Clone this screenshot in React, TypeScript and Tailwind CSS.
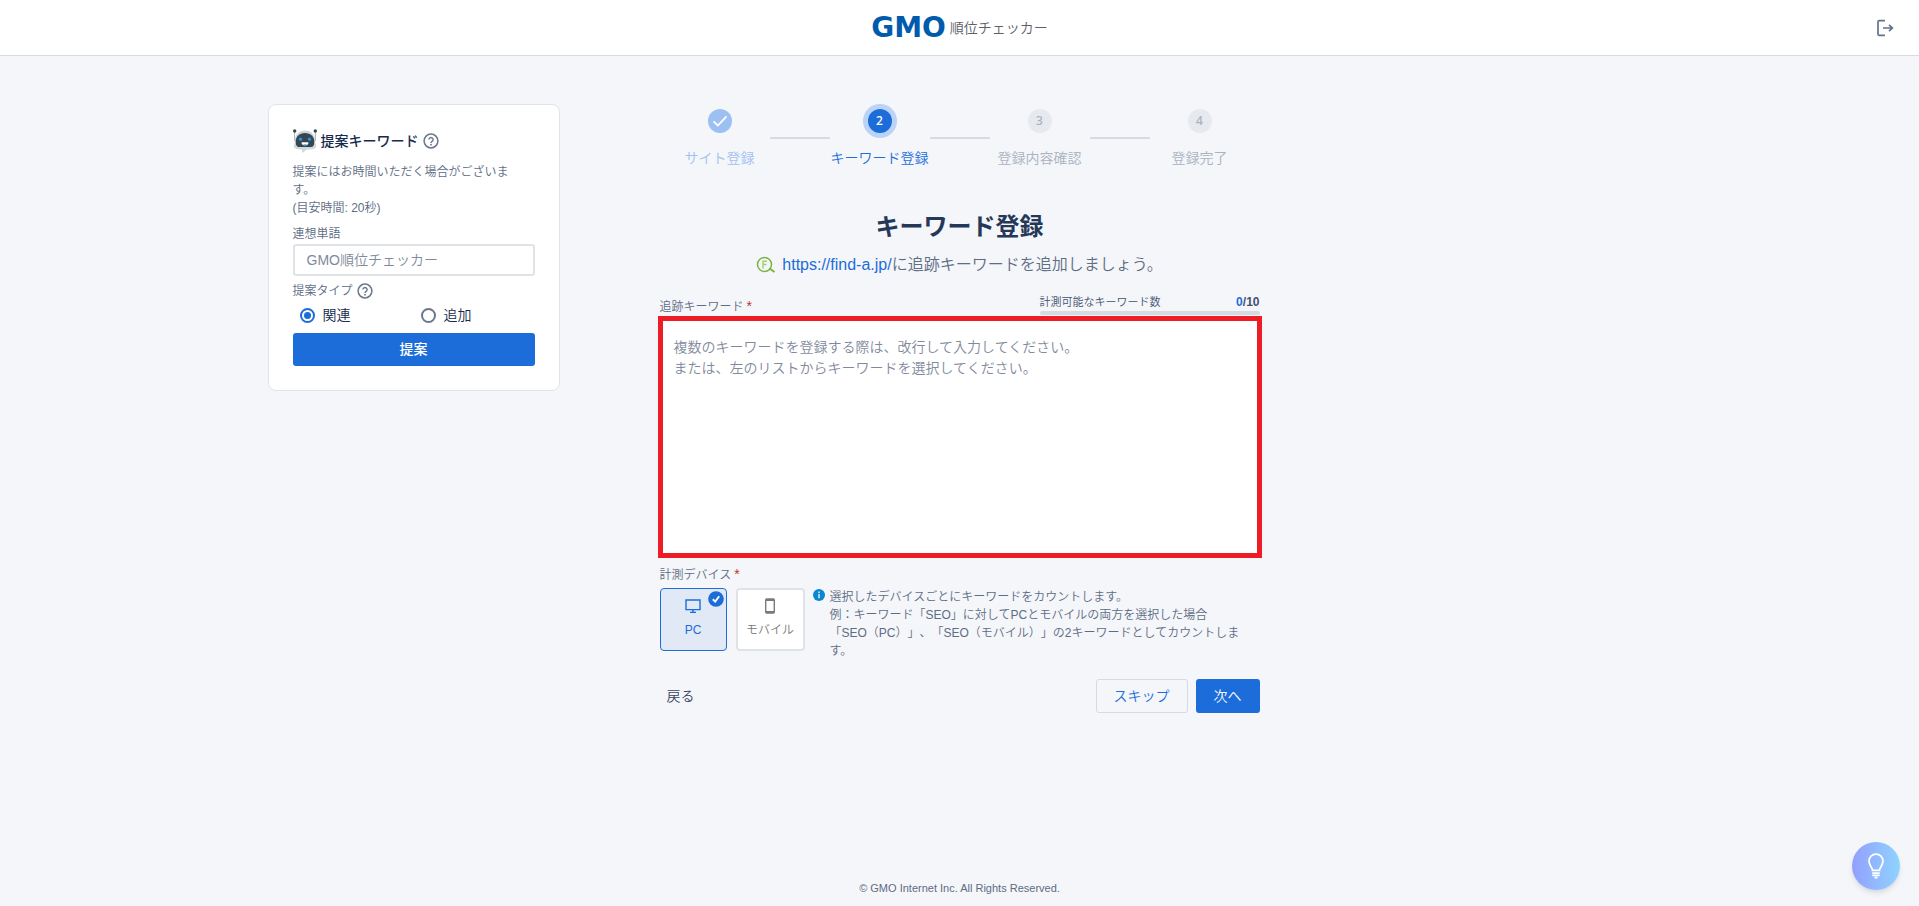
import { useState } from 'react';
import type { ReactNode } from 'react';

const MAX_KEYWORDS = 10;

const steps = ['サイト登録', 'キーワード登録', '登録内容確認', '登録完了'];
const CURRENT = 1;

function HelpIcon() {
  return (
    <svg viewBox="0 0 16 16" className="size-4 shrink-0" fill="none" stroke="#6b778c" aria-hidden="true">
      <circle cx="8" cy="8" r="6.9" strokeWidth="1.5" />
      <path d="M5.9 6.600a2.100 2.100 0 1 1 3.200 1.800c-.7.4-1.100.8-1.100 1.500" strokeWidth="1.400" />
      <circle cx="8" cy="11.700" r=".9" fill="#6b778c" stroke="none" />
    </svg>
  );
}

function RobotIcon() {
  return (
    <svg viewBox="0 0 24 24" className="size-6 shrink-0" aria-hidden="true">
      <path d="M1.600 2v10M22.400 2v10" stroke="#a9b5bb" strokeWidth="1" />
      <circle cx="1.700" cy="2" r="1.700" fill="#37474f" />
      <circle cx="22.300" cy="2" r="1.700" fill="#37474f" />
      <path d="M12 1.500c5.800 0 10 4 10 9.500v3c1.500.3 1.600 5-.4 5.500-2 .9-5 1-7.600 1L9 24v-3.500c-2.500 0-5-.2-6.600-1C.4 19 .5 14.300 2 14v-3c0-5.500 4.200-9.500 10-9.500z" fill="#cfd8dc" />
      <path d="M12 4c5.800 0 9.300 3.600 9.300 9 0 3.600-1.300 5-3.300 5H6c-2 0-3.300-1.400-3.300-5C2.700 7.600 6.200 4 12 4z" fill="#37474f" />
      <circle cx="7.500" cy="10.200" r="1.600" fill="#2196f3" />
      <circle cx="16.500" cy="10.200" r="1.600" fill="#2196f3" />
      <path d="M8.500 13.300h7c0 2.100-1.500 3.300-3.500 3.300s-3.500-1.200-3.500-3.300z" fill="#fff" />
      <path d="M10 15.800c1-.9 3-.9 4 0-1 .9-3 .9-4 0z" fill="#2196f3" />
    </svg>
  );
}

function Header() {
  return (
    <header className="flex h-14 items-center justify-between border-b border-[#d8dce3] bg-white px-6">
      <span className="w-5" />
      <h1 className="flex items-center gap-1">
        <span className="font-['DejaVu_Sans'] text-[28px] leading-6 font-bold text-[#005bac]">GMO</span>
        <span className="text-[14px] leading-6 text-[#5c6068]">順位チェッカー</span>
      </h1>
      <button type="button" aria-label="ログアウト" className="flex w-5 justify-center">
        <svg viewBox="0 0 18 18" className="size-[18px]" fill="none" stroke="#62738d" strokeWidth="1.700">
          <path d="M9 1.700H3.200a1.200 1.200 0 0 0-1.200 1.200v12.200a1.200 1.200 0 0 0 1.200 1.200H9" />
          <path d="M7 9h9M13 5.800 16.400 9 13 12.200" />
        </svg>
      </button>
    </header>
  );
}

function SuggestCard() {
  const [type, setType] = useState('related');
  const radio =
    'size-[15px] appearance-none rounded-full border-2 border-[#6b778c] bg-clip-content p-[2px] checked:border-[#1c6dd9] checked:bg-[#1c6dd9]';

  return (
    <aside className="w-[292px] rounded-lg border border-[#e0e4ea] bg-white p-6">
      <h2 className="flex h-6 items-center gap-1 text-[14px] font-medium text-[#172b4d]">
        <RobotIcon />
        提案キーワード
        <HelpIcon />
      </h2>
      <p className="mt-[10px] pr-4 text-[12px] leading-[18px]">
        提案にはお時間いただく場合がございます。
        <br />
        (目安時間: 20秒)
      </p>
      <label htmlFor="word" className="mt-2 block text-[12px] leading-[18px]">
        連想単語
      </label>
      <input
        id="word"
        placeholder="GMO順位チェッカー"
        className="mt-px block h-8 w-full rounded-[3px] border-2 border-[#dfe3e8] px-3 text-[14px] placeholder:text-[#7f8a9c]"
      />
      <fieldset className="mt-[6px]">
        <legend className="flex items-center gap-1 text-[12px] leading-[18px]">
          提案タイプ
          <HelpIcon />
        </legend>
        <div className="mt-[3px] grid grid-cols-2 px-[7px] text-[14px] leading-6 text-[#172b4d]">
          <label className="flex items-center gap-2">
            <input type="radio" name="type" className={radio} checked={type === 'related'} onChange={() => setType('related')} />
            関連
          </label>
          <label className="flex items-center gap-2 pl-[7px]">
            <input type="radio" name="type" className={radio} checked={type === 'extra'} onChange={() => setType('extra')} />
            追加
          </label>
        </div>
      </fieldset>
      <button type="button" className="mt-[6px] h-[33px] w-full rounded-[3px] bg-[#1c6dd9] text-[14px] font-medium text-white">
        提案
      </button>
    </aside>
  );
}

function Stepper() {
  return (
    <ol className="flex items-center justify-center">
      {steps.map((label, i) => (
        <li key={label} className="flex items-center">
          {i > 0 && <span className="h-[2px] w-[60px] bg-[#d6dae1]" />}
          <div
            className={`flex w-[100px] flex-col items-center gap-2 pb-[2px] ${
              i < CURRENT ? 'text-[#a0c1f0]' : i === CURRENT ? 'text-[#1c6dd9]' : 'text-[#a9b2bf]'
            }`}
          >
            <span className={`rounded-full p-[5px] ${i === CURRENT ? 'bg-[#bbd3f5]' : ''}`}>
              <span
                className={`flex size-6 items-center justify-center rounded-full font-['Noto_Sans'] text-[12px] font-medium ${
                  i < CURRENT
                    ? 'bg-[#9dc0f2] text-white'
                    : i === CURRENT
                      ? 'bg-[#1c6dd9] text-white'
                      : 'bg-[#e6e9ed]'
                }`}
              >
                {i < CURRENT ? (
                  <svg viewBox="0 0 24 24" className="size-6" fill="none" stroke="currentColor" strokeWidth="1.800">
                    <path d="m5.500 12.300 4.400 4.200L18.500 7.300" />
                  </svg>
                ) : (
                  i + 1
                )}
              </span>
            </span>
            <span className="text-[14px] leading-6 whitespace-nowrap">{label}</span>
          </div>
        </li>
      ))}
    </ol>
  );
}

type DeviceButtonProps = {
  label: string;
  selected: boolean;
  onClick: () => void;
  children: ReactNode;
};

function DeviceButton({ label, selected, onClick, children }: DeviceButtonProps) {
  return (
    <button
      type="button"
      aria-pressed={selected}
      onClick={onClick}
      className={`relative flex h-[63px] shrink-0 flex-col items-center justify-center gap-1 rounded-[4px] text-[12px] leading-6 ${
        selected
          ? 'w-[67px] border border-[#1c6dd9] bg-[#e2e9f6] text-[#1c6dd9]'
          : 'w-[69px] border-2 border-[#dfe3e8] bg-white text-[#7a7a7a]'
      }`}
    >
      {children}
      {label}
      {selected && (
        <svg viewBox="0 0 16 16" className="absolute top-[2px] right-[2px] size-4">
          <circle cx="8" cy="8" r="7.800" fill="#1c6dd9" />
          <path d="m4.800 8.300 2.400 2.300 4-5.400" fill="none" stroke="#fff" strokeWidth="1.900" />
        </svg>
      )}
    </button>
  );
}

function Required() {
  return <span className="ml-[3px] text-[14px] leading-none text-[#c0341d]">*</span>;
}

function KeywordForm() {
  const [text, setText] = useState('');
  const [pc, setPc] = useState(true);
  const [mobile, setMobile] = useState(false);

  const lines = text.split('\n').filter((l) => l.trim()).length;
  const count = lines * (Number(pc) + Number(mobile));

  return (
    <form onSubmit={(e) => e.preventDefault()}>
      <div className="mt-[15px] flex h-6 items-end justify-between">
        <label htmlFor="keywords" className="text-[12px] leading-[18px]">
          追跡キーワード
          <Required />
        </label>
        <div className="w-[220px] pb-px text-[11px] leading-4 text-[#42526e]">
          <div className="flex justify-between">
            <span>計測可能なキーワード数</span>
            <span className="text-[12px] font-bold">
              <span className="text-[#1c6dd9]">{count}</span>/{MAX_KEYWORDS}
            </span>
          </div>
          <div className="mt-px h-1 overflow-hidden rounded-[2px] bg-[#d6dae1]">
            <div className="h-1 bg-[#1c6dd9]" style={{ width: `${Math.min(100, (count / MAX_KEYWORDS) * 100)}%` }} />
          </div>
        </div>
      </div>
      <div className="-mx-[2px]">
        <textarea
          id="keywords"
          value={text}
          onChange={(e) => setText(e.target.value)}
          placeholder={'複数のキーワードを登録する際は、改行して入力してください。\nまたは、左のリストからキーワードを選択してください。'}
          className="block h-[242px] w-full resize-none border-5 border-[#ee1c24] bg-white px-[11px] py-4 text-[14px] leading-[21px] placeholder:text-[#7f8a9c]"
        />
      </div>

      <p className="mt-2 text-[12px] leading-[18px]">
        計測デバイス
        <Required />
      </p>
      <div className="mt-1 flex items-start">
        <div className="flex gap-[9px]">
          <DeviceButton label="PC" selected={pc} onClick={() => setPc(!pc)}>
            <svg viewBox="0 0 16 16" className="size-4" fill="none" stroke="currentColor" strokeWidth="1.400">
              <path d="M1 2h14v9.600H1z" />
              <path d="M8 11.600v2.600M5 14.400h6" />
            </svg>
          </DeviceButton>
          <DeviceButton label="モバイル" selected={mobile} onClick={() => setMobile(!mobile)}>
            <svg viewBox="0 0 16 16" className="size-4" fill="none" stroke="currentColor">
              <rect x="3.700" y="1" width="8.600" height="14" rx="1" strokeWidth="1.400" />
              <path d="M4 2h8M4 14h8" strokeWidth="2" />
            </svg>
          </DeviceButton>
        </div>
        <svg viewBox="0 0 12 12" className="mt-px ml-2 size-3 shrink-0" aria-hidden="true">
          <circle cx="6" cy="6" r="6" fill="#0788d1" />
          <path d="M6 5v4.200M6 2.600V4" stroke="#fff" strokeWidth="1.300" />
        </svg>
        <p className="ml-[5px] pr-3 text-[12px] leading-[18px] [text-spacing-trim:space-all]">
          選択したデバイスごとにキーワードをカウントします。
          <br />
          例：キーワード「SEO」に対してPCとモバイルの両方を選択した場合
          <br />
          「SEO（PC）」、「SEO（モバイル）」の2キーワードとしてカウントします。
        </p>
      </div>

      <div className="mt-[19px] flex h-[34px] items-stretch gap-2 text-[14px]">
        <button type="button" className="mr-auto px-[7px] text-[#344563]">
          戻る
        </button>
        <button type="button" className="w-[92px] rounded-[3px] border border-[#d6dae1] text-[#1c6dd9]">
          スキップ
        </button>
        <button type="submit" className="w-16 rounded-[3px] bg-[#1c6dd9] text-white">
          次へ
        </button>
      </div>
    </form>
  );
}

export default function App() {
  return (
    <div className="flex min-h-screen flex-col bg-[#f4f6fa] font-['Liberation_Sans','Noto_Sans_CJK_JP',sans-serif] font-[350] text-[#5e6c84]" lang="ja">
      <Header />
      <div className="grid flex-1 grid-cols-[1fr_600px_1fr] items-start pt-12">
        <div className="flex justify-end pr-[100px]">
          <SuggestCard />
        </div>
        <main>
          <Stepper />
          <h2 className="mt-[37px] text-center text-[24px] leading-9 font-bold text-[#253858]">キーワード登録</h2>
          <p className="mt-2 flex items-center justify-center text-[16px] leading-6">
            <svg viewBox="0 0 20 18" className="mr-[6px] h-[18px] w-5" fill="none" stroke="#7cb342" aria-hidden="true">
              <circle cx="8.500" cy="8.500" r="7" strokeWidth="1.500" />
              <path d="M7 12.500V5.200h4M7 8.600h3.500" stroke="#a5cf6f" strokeWidth="1.500" />
              <path d="m13.300 12.300 5.200 3.700" strokeWidth="2" />
            </svg>
            <a href="https://find-a.jp/" className="text-[#1c6dd9]">
              https://find-a.jp/
            </a>
            に追跡キーワードを追加しましょう。
          </p>
          <KeywordForm />
        </main>
      </div>
      <footer className="pb-[10px] text-center text-[11px] leading-4">© GMO Internet Inc. All Rights Reserved.</footer>
      <button
        type="button"
        aria-label="ヒント"
        className="fixed right-[19px] bottom-4 flex size-12 items-center justify-center rounded-full bg-linear-to-r from-[#929fff] to-[#8fd3ff] shadow-md"
      >
        <svg viewBox="0 0 24 24" className="size-7" fill="none" stroke="#fff" strokeWidth="1.500">
          <path d="M9 15.700c0-2.600-3-4-3-7.900a6 6 0 0 1 12 0c0 3.900-3 5.300-3 7.900z" />
          <path d="M8.800 18h6.400M8.800 20h6.400M10.700 22h2.600" />
        </svg>
      </button>
    </div>
  );
}
